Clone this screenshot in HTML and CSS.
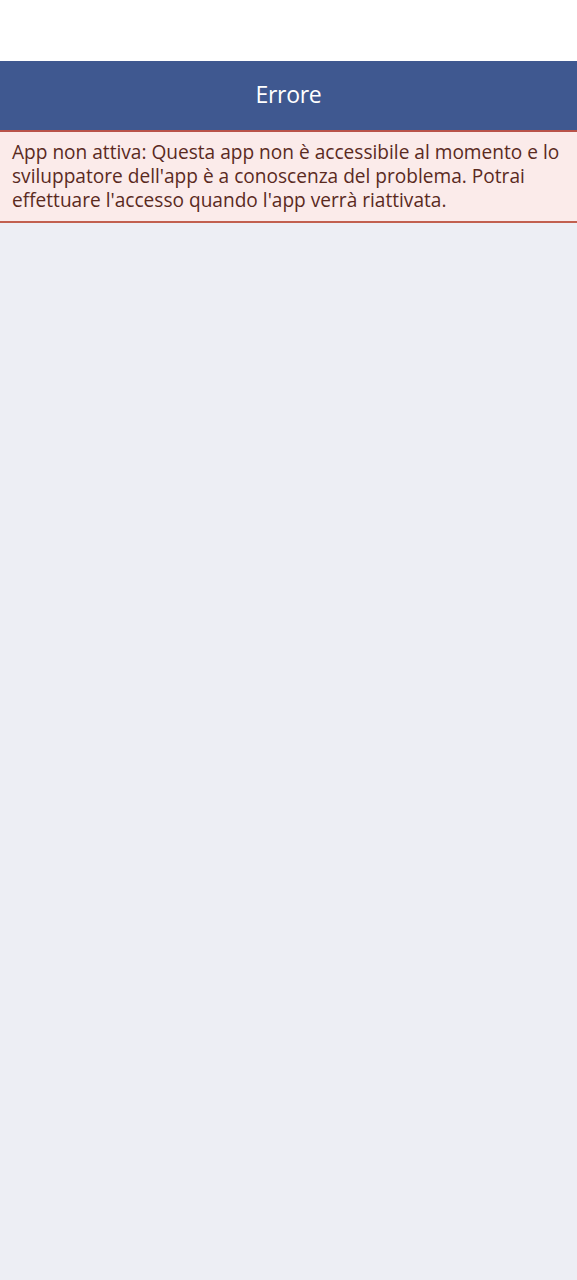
FILE: index.html
```html
<!DOCTYPE html>
<html lang="it">
<head>
<meta charset="utf-8">
<link rel="stylesheet" href="styles.css">
</head>
<body>
<div class="top"></div>
<header class="bar"><h1 class="title">Errore</h1></header>
<div class="error">App non attiva: Questa app non è accessibile al momento e lo sviluppatore dell'app è a conoscenza del problema. Potrai effettuare l'accesso quando l'app verrà riattivata.</div>
</body>
</html>
```
FILE: styles.css
```css
html, body { margin: 0; padding: 0; }
body {
  background: #edeef4;
  font-family: "Open Sans", Roboto, sans-serif;
  min-height: 1280px;
}
.top { height: 61px; background: #ffffff; }
.bar {
  height: 69px;
  background: #3f5890;
  display: flex;
  align-items: center;
  justify-content: center;
  padding-bottom: 3px;
  box-sizing: border-box;
}
.title {
  margin: 0;
  color: #ffffff;
  font-weight: 400;
  font-size: 23px;
  letter-spacing: -0.3px;
}
.error {
  background: #fbebea;
  border-top: 2px solid #b9534a;
  border-bottom: 2px solid #c2604f;
  color: #5a2a1e;
  font-size: 19.1px;
  line-height: 24px;
  padding: 8px 10px 9px 12px;
}
```
